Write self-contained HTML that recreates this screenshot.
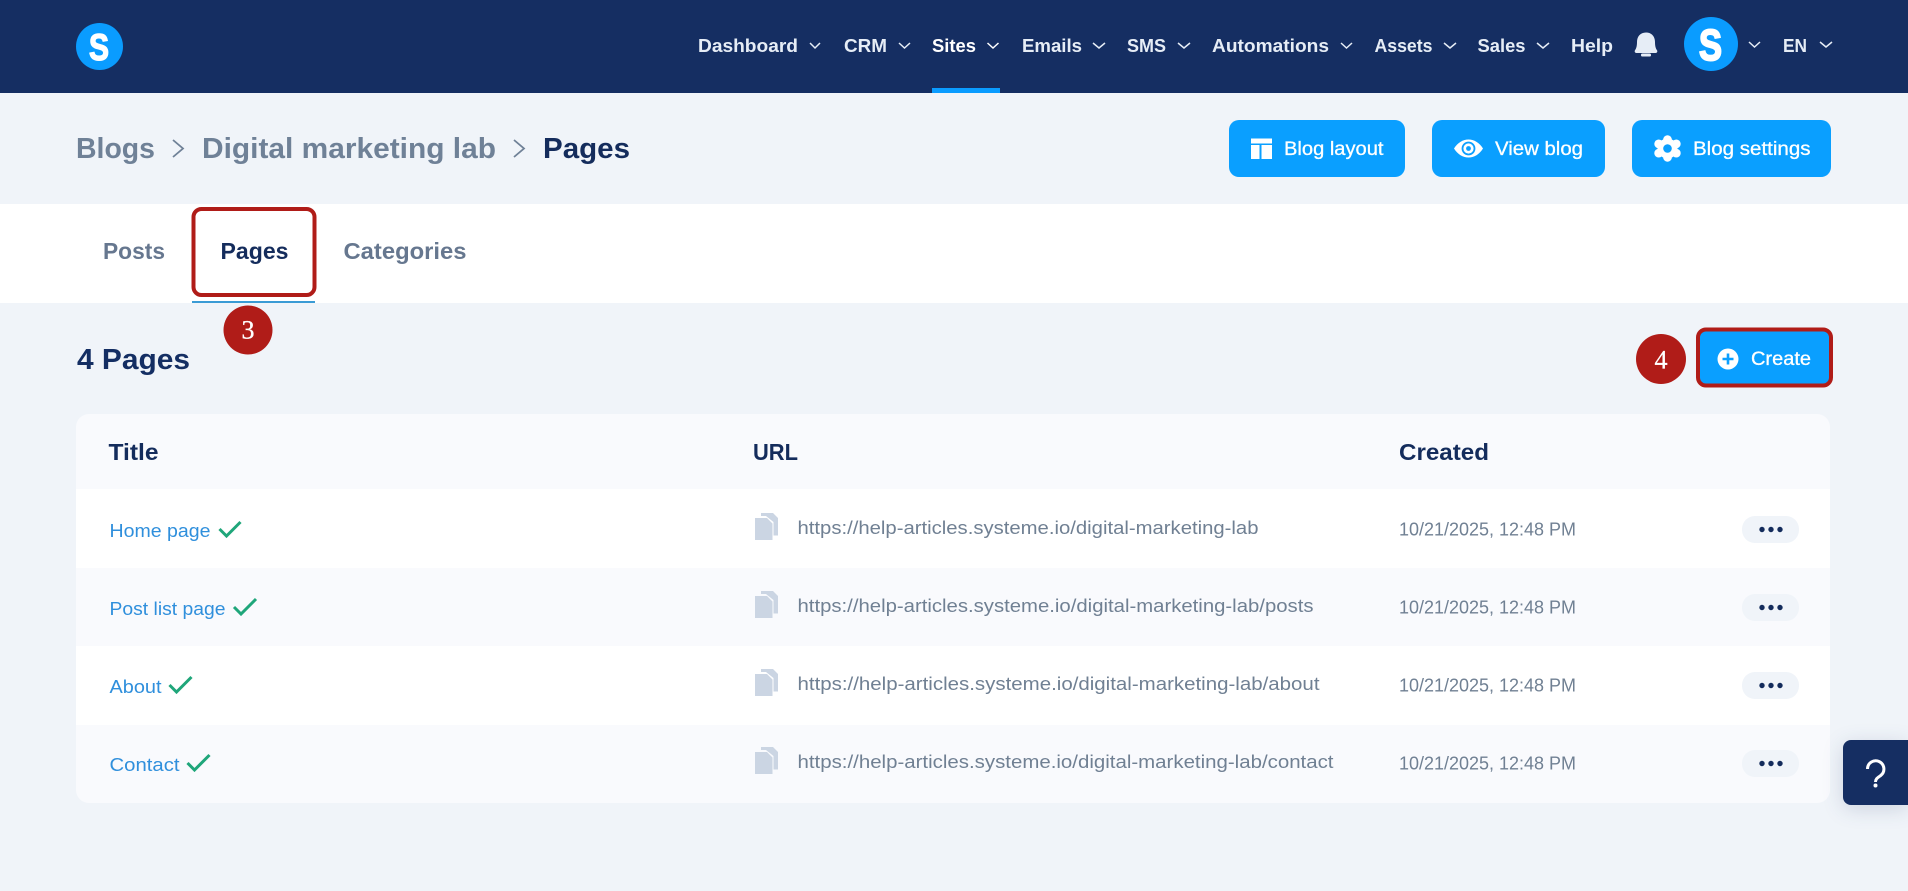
<!DOCTYPE html>
<html lang="en">
<head>
<meta charset="utf-8">
<title>Blog pages</title>
<style>
html,body{margin:0;padding:0;width:1908px;height:891px;overflow:hidden;background:#f0f4f9}
svg{display:block}
text{font-family:"Liberation Sans",sans-serif;white-space:pre}
.nav{font-size:18px;font-weight:700;fill:#e6edf6}
.bc{font-size:29px;font-weight:700;fill:#6f8197}
.tab{font-size:23px;font-weight:700;fill:#66778f}
.btn{font-size:19px;fill:#fff;stroke:#fff;stroke-width:.3px}
.th{font-size:23px;font-weight:700;fill:#142c5c}
.lnk{font-size:18.5px;fill:#2f8fdc}
.url{font-size:18.5px;fill:#708093}
.chev{fill:none;stroke:#e6edf6;stroke-width:1.5}
.chk{fill:none;stroke:#1fa67a;stroke-width:3}
.copy{fill:#cbd5e3}
.dot{fill:#142c5c}
.num{font-family:"Liberation Serif",serif;font-size:26px;fill:#fff;stroke:#fff;stroke-width:.3px}
</style>
</head>
<body>
<svg width="1908" height="891" viewBox="0 0 1908 891" xmlns="http://www.w3.org/2000/svg">
<rect width="1908" height="891" fill="#f0f4f9"/>

<!-- top nav -->
<rect width="1908" height="93" fill="#152e62"/>
<circle cx="99.500" cy="46.500" r="23.500" fill="#0a9cff"/>
<text x="89" y="60" font-size="37" font-weight="700" fill="#fff" stroke="#fff" stroke-width="1.400" textLength="20" lengthAdjust="spacingAndGlyphs">S</text>

<text class="nav" x="698" y="52" textLength="100" lengthAdjust="spacingAndGlyphs">Dashboard</text>
<path class="chev" d="M810 43l5 5 5-5"/>
<text class="nav" x="844" y="52" textLength="43" lengthAdjust="spacingAndGlyphs">CRM</text>
<path class="chev" d="M899 43l5.500 5 5.500-5"/>
<text class="nav" x="932" y="52" textLength="44" lengthAdjust="spacingAndGlyphs" style="fill:#fff">Sites</text>
<path class="chev" d="M987.500 43l5.500 5 5.500-5" style="stroke:#fff"/>
<text class="nav" x="1022" y="52" textLength="60" lengthAdjust="spacingAndGlyphs">Emails</text>
<path class="chev" d="M1093 43l6 5 6-5"/>
<text class="nav" x="1127" y="52" textLength="39" lengthAdjust="spacingAndGlyphs">SMS</text>
<path class="chev" d="M1178 43l6 5 6-5"/>
<text class="nav" x="1212" y="52" textLength="117" lengthAdjust="spacingAndGlyphs">Automations</text>
<path class="chev" d="M1341 43l5.500 5 5.500-5"/>
<text class="nav" x="1374.500" y="52" textLength="58" lengthAdjust="spacingAndGlyphs">Assets</text>
<path class="chev" d="M1444 43l6 5 6-5"/>
<text class="nav" x="1477.500" y="52" textLength="48" lengthAdjust="spacingAndGlyphs">Sales</text>
<path class="chev" d="M1537 43l6 5 6-5"/>
<text class="nav" x="1571" y="52" textLength="42" lengthAdjust="spacingAndGlyphs">Help</text>
<rect x="932" y="88" width="68" height="5" fill="#0a9cff"/>

<!-- bell -->
<path d="M1646 32.500c-5.800 0-9 4.200-9 9.500 0 3.800-.6 6.300-2 8.300-.8 1.200 0 2.700 1.400 2.700h19.200c1.400 0 2.200-1.500 1.400-2.700-1.400-2-2-4.500-2-8.300 0-5.300-3.200-9.500-9-9.500z" fill="#e6edf6"/>
<rect x="1641" y="53.500" width="10" height="3" rx="1.400" fill="#e6edf6"/>

<!-- avatar -->
<circle cx="1711" cy="44" r="27" fill="#0a9cff"/>
<text x="1699" y="60" font-size="44" font-weight="700" fill="#fff" stroke="#fff" stroke-width="2" textLength="23" lengthAdjust="spacingAndGlyphs">S</text>
<path class="chev" d="M1749 42l5.500 5 5.500-5"/>
<text class="nav" x="1783" y="52" textLength="24" lengthAdjust="spacingAndGlyphs">EN</text>
<path class="chev" d="M1820 42l6 5 6-5"/>

<!-- breadcrumbs -->
<text class="bc" x="76" y="158" textLength="79" lengthAdjust="spacingAndGlyphs">Blogs</text>
<path d="M173 140l10 8.500-10 8.500" fill="none" stroke="#6f8197" stroke-width="1.800"/>
<text class="bc" x="202" y="158" textLength="294" lengthAdjust="spacingAndGlyphs">Digital marketing lab</text>
<path d="M514 140l10 8.500-10 8.500" fill="none" stroke="#6f8197" stroke-width="1.800"/>
<text class="bc" x="543" y="158" textLength="87" lengthAdjust="spacingAndGlyphs" style="fill:#142c5c">Pages</text>

<!-- header buttons -->
<rect x="1229" y="120" width="176" height="57" rx="10" fill="#0a9fff"/>
<path d="M1251 138.500h21v5h-21zM1251 145h8.500v14H1251zM1261.500 145h10.500v14h-10.500z" fill="#fff"/>
<text class="btn" x="1284" y="155" textLength="99.500" lengthAdjust="spacingAndGlyphs">Blog layout</text>

<rect x="1432" y="120" width="173" height="57" rx="10" fill="#0a9fff"/>
<path d="M1454 148.500c3.500-5.500 8.500-9 14.500-9s11 3.500 14.500 9c-3.500 5.500-8.500 9-14.500 9s-11-3.500-14.500-9z" fill="#fff"/>
<circle cx="1468.500" cy="148.500" r="6" fill="none" stroke="#0a9fff" stroke-width="1.800"/>
<circle cx="1468.500" cy="148.500" r="2.400" fill="#0a9fff"/>
<text class="btn" x="1495" y="155" textLength="88" lengthAdjust="spacingAndGlyphs">View blog</text>

<rect x="1632" y="120" width="199" height="57" rx="10" fill="#0a9fff"/>
<g transform="translate(1667.500 148.500)" fill="#fff">
  <circle r="10"/>
  <circle cx="0" cy="-8.800" r="4.400"/><circle cx="0" cy="8.800" r="4.400"/>
  <circle cx="8.800" cy="-4.600" r="4.400"/><circle cx="-8.800" cy="-4.600" r="4.400"/>
  <circle cx="8.800" cy="4.600" r="4.400"/><circle cx="-8.800" cy="4.600" r="4.400"/>
  <circle r="4.300" fill="#0a9fff"/>
</g>
<text class="btn" x="1693" y="155" textLength="117.500" lengthAdjust="spacingAndGlyphs">Blog settings</text>

<!-- tabs -->
<rect x="0" y="204" width="1908" height="99" fill="#fff"/>
<text class="tab" x="103" y="259" textLength="62" lengthAdjust="spacingAndGlyphs">Posts</text>
<text class="tab" x="220.500" y="259" textLength="68" lengthAdjust="spacingAndGlyphs" style="fill:#142c5c">Pages</text>
<text class="tab" x="343.500" y="259" textLength="123" lengthAdjust="spacingAndGlyphs">Categories</text>
<rect x="192" y="301" width="123" height="2" fill="#3a9bd5"/>
<rect x="193.500" y="209" width="121" height="86" rx="8" fill="none" stroke="#b01c18" stroke-width="4"/>

<circle cx="248" cy="330" r="24.500" fill="#b01c18"/>
<text class="num" x="248" y="338.500" text-anchor="middle">3</text>

<!-- section heading -->
<text x="77" y="369" font-size="29" font-weight="700" fill="#142e63" textLength="113" lengthAdjust="spacingAndGlyphs">4 Pages</text>

<circle cx="1661" cy="359" r="25" fill="#b01c18"/>
<text class="num" x="1661" y="368.500" text-anchor="middle">4</text>

<rect x="1698" y="329.500" width="133" height="56" rx="8" fill="#0a9fff" stroke="#b01c18" stroke-width="4"/>
<circle cx="1728" cy="359" r="10.500" fill="#fff"/>
<path d="M1722.500 359h11M1728 353.500v11" stroke="#0a9fff" stroke-width="2.600"/>
<text class="btn" x="1751" y="365" textLength="60" lengthAdjust="spacingAndGlyphs">Create</text>

<!-- table -->
<rect x="76" y="414" width="1754" height="389" rx="13" fill="#f9fafd"/>
<rect x="76" y="489" width="1754" height="79" fill="#fff"/>
<rect x="76" y="646" width="1754" height="79" fill="#fff"/>

<text class="th" x="108.500" y="460" textLength="50" lengthAdjust="spacingAndGlyphs">Title</text>
<text class="th" x="753" y="460" textLength="45" lengthAdjust="spacingAndGlyphs">URL</text>
<text class="th" x="1399" y="460" textLength="90" lengthAdjust="spacingAndGlyphs">Created</text>

<!-- row 1 -->
<text class="lnk" x="109.500" y="537" textLength="101" lengthAdjust="spacingAndGlyphs">Home page</text>
<path class="chk" d="M219.500 529l7 7 14-14"/>
<path class="copy" d="M755 518h12l5.500 5.500V540H755zM761 513h12l5 5v17.500h-4.500V522l-7.500-6h-5z"/>
<text class="url" x="797.500" y="534" textLength="461" lengthAdjust="spacingAndGlyphs">https://help-articles.systeme.io/digital-marketing-lab</text>
<text class="url" x="1399" y="535.500" textLength="177" lengthAdjust="spacingAndGlyphs">10/21/2025, 12:48 PM</text>
<rect x="1742" y="516" width="57" height="27" rx="13" fill="#f0f4f9"/>
<circle class="dot" cx="1762" cy="529.500" r="2.700"/><circle class="dot" cx="1771" cy="529.500" r="2.700"/><circle class="dot" cx="1780" cy="529.500" r="2.700"/>

<!-- row 2 -->
<text class="lnk" x="109.500" y="615" textLength="116" lengthAdjust="spacingAndGlyphs">Post list page</text>
<path class="chk" d="M234 607l7 7 15-15"/>
<path class="copy" d="M755 596h12l5.500 5.500V618H755zM761 591h12l5 5v17.500h-4.500V600l-7.500-6h-5z"/>
<text class="url" x="797.500" y="612" textLength="516" lengthAdjust="spacingAndGlyphs">https://help-articles.systeme.io/digital-marketing-lab/posts</text>
<text class="url" x="1399" y="613.500" textLength="177" lengthAdjust="spacingAndGlyphs">10/21/2025, 12:48 PM</text>
<rect x="1742" y="594" width="57" height="27" rx="13" fill="#f0f4f9"/>
<circle class="dot" cx="1762" cy="607.500" r="2.700"/><circle class="dot" cx="1771" cy="607.500" r="2.700"/><circle class="dot" cx="1780" cy="607.500" r="2.700"/>

<!-- row 3 -->
<text class="lnk" x="109.500" y="693" textLength="52" lengthAdjust="spacingAndGlyphs">About</text>
<path class="chk" d="M169.500 685l7 7 15-15"/>
<path class="copy" d="M755 674h12l5.500 5.500V696H755zM761 669h12l5 5v17.500h-4.500V678l-7.500-6h-5z"/>
<text class="url" x="797.500" y="690" textLength="522" lengthAdjust="spacingAndGlyphs">https://help-articles.systeme.io/digital-marketing-lab/about</text>
<text class="url" x="1399" y="691.500" textLength="177" lengthAdjust="spacingAndGlyphs">10/21/2025, 12:48 PM</text>
<rect x="1742" y="672" width="57" height="27" rx="13" fill="#f0f4f9"/>
<circle class="dot" cx="1762" cy="685.500" r="2.700"/><circle class="dot" cx="1771" cy="685.500" r="2.700"/><circle class="dot" cx="1780" cy="685.500" r="2.700"/>

<!-- row 4 -->
<text class="lnk" x="109.500" y="771" textLength="70" lengthAdjust="spacingAndGlyphs">Contact</text>
<path class="chk" d="M187.500 763l7 7 15-15"/>
<path class="copy" d="M755 752h12l5.500 5.500V774H755zM761 747h12l5 5v17.500h-4.500V756l-7.500-6h-5z"/>
<text class="url" x="797.500" y="768" textLength="536" lengthAdjust="spacingAndGlyphs">https://help-articles.systeme.io/digital-marketing-lab/contact</text>
<text class="url" x="1399" y="769.500" textLength="177" lengthAdjust="spacingAndGlyphs">10/21/2025, 12:48 PM</text>
<rect x="1742" y="750" width="57" height="27" rx="13" fill="#f0f4f9"/>
<circle class="dot" cx="1762" cy="763.500" r="2.700"/><circle class="dot" cx="1771" cy="763.500" r="2.700"/><circle class="dot" cx="1780" cy="763.500" r="2.700"/>

<!-- help widget -->
<path d="M1851 740h57v65h-57a8 8 0 0 1-8-8v-49a8 8 0 0 1 8-8z" fill="#152e62" style="filter:drop-shadow(0 4px 10px rgba(20,44,92,.16))"/>
<path d="M1867.500 769a8.200 8.200 0 1 1 13.200 6.500c-3 2.200-5.200 3.300-5.200 6.500" fill="none" stroke="#fff" stroke-width="3"/>
<circle cx="1875.500" cy="785.500" r="2" fill="#fff"/>
</svg>
</body>
</html>
